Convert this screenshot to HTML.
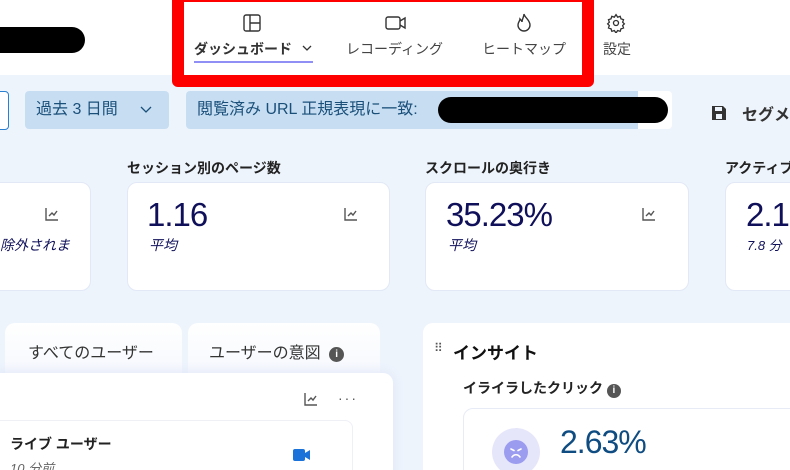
<!DOCTYPE html>
<html><head><meta charset="utf-8"><style>
*{margin:0;padding:0;box-sizing:border-box}
html,body{width:790px;height:470px;overflow:hidden}
body{background:#eef4fc;font-family:"Liberation Sans","Noto Sans CJK JP",sans-serif;position:relative;color:#222}
.a{position:absolute;white-space:nowrap}
.hdr{left:0;top:0;width:790px;height:75px;background:#fff}
.nav{font-size:14px;color:#444;top:39px}
.chip{background:#c7def2;border-radius:4px;color:#1a4f7a;font-size:16px;top:91px;height:38px;line-height:38px}
.lbl{font-size:14px;font-weight:bold;color:#222;top:158px}
.card{background:#fff;border:1px solid #e2e8f5;border-radius:10px;top:182px;height:109px}
.val{font-size:33px;color:#10105a;top:196px;letter-spacing:-1px}
.sub{font-size:14px;font-style:italic;color:#10105a;top:235px}
</style></head><body>
<div class="a hdr"></div>
<div class="a" style="left:-20px;top:27px;width:105px;height:26px;background:#000;border-radius:13px"></div>
<div class="a" style="left:172px;top:-10px;width:422px;height:97px;border:12px solid #f00;border-radius:0 0 6px 6px"></div>
<svg class="a" style="left:242px;top:13px" width="20" height="20" viewBox="0 0 20 20" fill="none" stroke="#333" stroke-width="1.4"><rect x="2" y="2" width="16" height="16" rx="2"/><path d="M8 2v16M8 10h10"/></svg>
<div class="a nav" style="left:194px;font-weight:bold;color:#333">ダッシュボード</div>
<svg class="a" style="left:301px;top:44px" width="12" height="8" viewBox="0 0 12 8" fill="none" stroke="#333" stroke-width="1.3"><path d="M2 2l4 4 4-4"/></svg>
<div class="a" style="left:194px;top:61px;width:119px;height:2px;background:#8f8ff5"></div>
<svg class="a" style="left:385px;top:13px" width="22" height="20" viewBox="0 0 22 20" fill="none" stroke="#333" stroke-width="1.4"><rect x="1" y="4" width="14" height="12" rx="2"/><path d="M15 8l5-3v10l-5-3"/></svg>
<div class="a nav" style="left:346px">レコーディング</div>
<svg class="a" style="left:514px;top:12px" width="20" height="22" viewBox="0 0 20 22" fill="none" stroke="#333" stroke-width="1.4"><path d="M10 2c1 4 6 6 6 11a6 6 0 0 1-12 0c0-3 2-4 2-6 1 1 2 2 2 3 0-3 2-5 2-8z"/></svg>
<div class="a nav" style="left:482px">ヒートマップ</div>
<svg class="a" style="left:606px;top:13px" width="20" height="20" viewBox="0 0 24 24" fill="none" stroke="#333" stroke-width="1.6"><circle cx="12" cy="12" r="3"/><path d="M12 2l2 3 3-1 1 3 3 1-1 3 2 2-2 2 1 3-3 1-1 3-3-1-2 3-2-3-3 1-1-3-3-1 1-3-2-2 2-2-1-3 3-1 1-3 3 1z"/></svg>
<div class="a nav" style="left:603px">設定</div>
<div class="a" style="left:-10px;top:91px;width:19px;height:39px;background:#fff;border:1px solid #2a7fd0;border-radius:4px"></div>
<div class="a chip" style="left:25px;width:144px;padding-left:11px">過去 3 日間</div>
<svg class="a" style="left:139px;top:104px" width="14" height="10" viewBox="0 0 14 10" fill="none" stroke="#1a4f7a" stroke-width="1.3"><path d="M2 3l5 5 5-5"/></svg>
<div class="a chip" style="left:186px;width:486px;padding-left:11px;background:linear-gradient(90deg,#c7def2 93%,#fff 93%)">閲覧済み URL 正規表現に一致:</div>
<div class="a" style="left:438px;top:97px;width:230px;height:26px;background:#000;border-radius:13px"></div>
<svg class="a" style="left:710px;top:104px" width="18" height="18" viewBox="0 0 18 18"><path d="M2 2h11l3 3v11H2z" fill="#333"/><rect x="5" y="3" width="7" height="4" fill="#eef4fc"/><rect x="6" y="10" width="6" height="5" fill="#eef4fc"/></svg>
<div class="a" style="left:742px;top:101px;font-size:16px;font-weight:bold;color:#333">セグメント</div>
<div class="a lbl" style="left:127px">セッション別のページ数</div>
<div class="a lbl" style="left:425px">スクロールの奥行き</div>
<div class="a lbl" style="left:725px">アクティブ時間</div>
<div class="a card" style="left:-20px;width:111px"></div>
<div class="a card" style="left:127px;width:263px"></div>
<div class="a card" style="left:425px;width:264px"></div>
<div class="a card" style="left:725px;width:100px"></div>
<div class="a sub" style="left:0">除外されま</div>
<div class="a val" style="left:147px">1.16</div><div class="a sub" style="left:149px">平均</div>
<div class="a val" style="left:446px">35.23%</div><div class="a sub" style="left:448px">平均</div>
<div class="a val" style="left:746px">2.1</div><div class="a sub" style="left:747px;font-size:13px">7.8 分</div>
<svg class="a" style="left:44px;top:206px" width="16" height="16" viewBox="0 0 16 16" fill="none" stroke="#555" stroke-width="1.4"><path d="M2 2v12h12M5 10l3-3 2 2 3-4"/></svg>
<svg class="a" style="left:343px;top:206px" width="16" height="16" viewBox="0 0 16 16" fill="none" stroke="#555" stroke-width="1.4"><path d="M2 2v12h12M5 10l3-3 2 2 3-4"/></svg>
<svg class="a" style="left:641px;top:206px" width="16" height="16" viewBox="0 0 16 16" fill="none" stroke="#555" stroke-width="1.4"><path d="M2 2v12h12M5 10l3-3 2 2 3-4"/></svg>
<div class="a" style="left:5px;top:323px;width:177px;height:60px;background:linear-gradient(#fff,#f4f7fd);border-radius:10px;font-size:16px;color:#333;padding:16px 0 0 23px">すべてのユーザー</div>
<div class="a" style="left:188px;top:323px;width:192px;height:60px;background:linear-gradient(#fff,#f4f7fd);border-radius:10px;font-size:16px;color:#333;padding:16px 0 0 21px">ユーザーの意図 <span style="display:inline-block;width:15px;height:15px;border-radius:8px;background:#555;color:#fff;font-size:10px;text-align:center;line-height:15px;font-weight:bold;vertical-align:1px;margin-left:4px">i</span></div>
<div class="a" style="left:-10px;top:373px;width:403px;height:110px;background:#fff;border-radius:10px;box-shadow:0 0 12px #dde4f7"></div>
<svg class="a" style="left:303px;top:391px" width="16" height="16" viewBox="0 0 16 16" fill="none" stroke="#555" stroke-width="1.4"><path d="M2 2v12h12M5 10l3-3 2 2 3-4"/></svg>
<div class="a" style="left:338px;top:390px;font-size:14px;color:#555;letter-spacing:2px">···</div>
<div class="a" style="left:-10px;top:420px;width:363px;height:60px;border:1px solid #eef0f6;border-radius:8px"></div>
<div class="a" style="left:10px;top:434px;font-size:14px;font-weight:bold;color:#222">ライブ ユーザー</div>
<div class="a" style="left:10px;top:458px;font-size:13px;font-style:italic;color:#666">10 分前</div>
<svg class="a" style="left:293px;top:447px" width="18" height="16" viewBox="0 0 18 16"><rect x="0" y="2" width="12" height="12" rx="2" fill="#1a73d8"/><path d="M12 6l5-3v10l-5-3z" fill="#1a73d8"/></svg>
<div class="a" style="left:423px;top:323px;width:380px;height:160px;background:#fff;border-radius:10px"></div>
<div class="a" style="left:434px;top:341px;font-size:12px;color:#555">⠿</div>
<div class="a" style="left:453px;top:339px;font-size:17px;font-weight:bold;color:#111">インサイト</div>
<div class="a" style="left:463px;top:378px;font-size:14px;font-weight:bold;color:#222">イライラしたクリック <span style="display:inline-block;width:14px;height:14px;border-radius:7px;background:#555;color:#fff;font-size:10px;text-align:center;line-height:14px">i</span></div>
<div class="a" style="left:463px;top:408px;width:340px;height:80px;border:1px solid #e6ebf5;border-radius:10px"></div>
<div class="a" style="left:492px;top:428px;width:48px;height:48px;border-radius:24px;background:#e6e6fb"></div>
<svg class="a" style="left:504px;top:440px" width="24" height="24" viewBox="0 0 24 24"><circle cx="12" cy="12" r="12" fill="#9b9bf0"/><path d="M7 9l3 1.5M17 9l-3 1.5M8 17c2-3 6-3 8 0" stroke="#fff" stroke-width="1.6" fill="none" stroke-linecap="round"/></svg>
<div class="a" style="left:560px;top:424px;font-size:32px;color:#0f4c81;letter-spacing:-1px">2.63%</div>
</body></html>
